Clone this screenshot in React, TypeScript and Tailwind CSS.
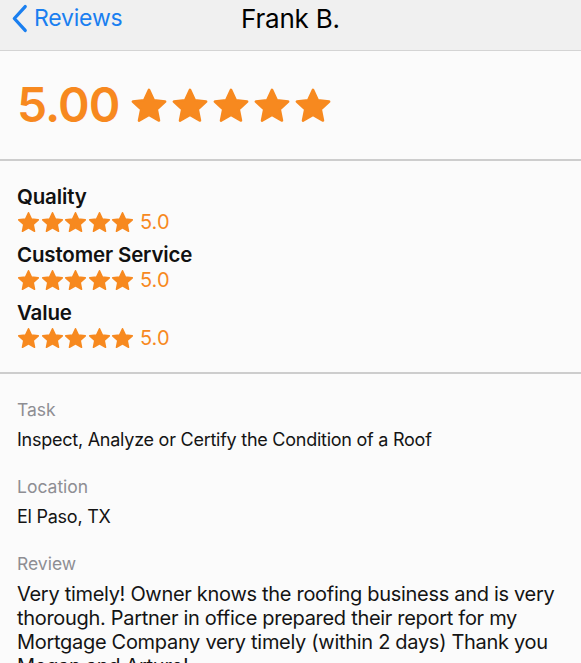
import React from 'react';

const ORANGE = '#f7891f';

function Star({ className }: { className: string }) {
  return (
    <svg viewBox="0 0 24 24" className={className} fill={ORANGE} stroke={ORANGE} strokeWidth={1.6} strokeLinejoin="round">
      <path d="M12 1.8l3.05 6.55 7.15.85-5.3 4.9 1.42 7.1L12 17.6l-6.32 3.6 1.42-7.1-5.3-4.9 7.15-.85z" />
    </svg>
  );
}

function StarRow({ size, gap }: { size: string; gap: string }) {
  return (
    <div className={`flex ${gap}`}>
      {[0, 1, 2, 3, 4].map((i) => (
        <Star key={i} className={size} />
      ))}
    </div>
  );
}

const ratings = ['Quality', 'Customer Service', 'Value'];

export default function App() {
  return (
    <div className="h-[663px] w-[581px] overflow-hidden bg-[#fbfbfb] text-[#111] font-['Inter','Liberation_Sans',sans-serif]">
      {/* nav bar */}
      <div className="grid h-[51px] grid-cols-[1fr_auto_1fr] items-center border-b border-[#d4d4d4] bg-[#f0f0f0] pb-[13px]">
        <div className="flex items-center pl-[11px] text-[#1a7ff0]">
          <svg viewBox="0 0 16 28" className="h-[29px] w-[17px]" fill="none" stroke="currentColor" strokeWidth={3.2} strokeLinecap="round" strokeLinejoin="round">
            <path d="M13.5 2.5L3 14l10.5 11.5" />
          </svg>
          <span className="ml-[6px] text-[23px] leading-none tracking-[-0.2px]">Reviews</span>
        </div>
        <div className="text-[26px] leading-none tracking-[-0.2px] text-black">Frank B.</div>
        <div />
      </div>

      {/* overall */}
      <div className="flex h-[110px] items-center border-b-2 border-[#cdcdcd] pl-[17px]">
        <span className="text-[48px] font-semibold leading-none tracking-[-1px]" style={{ color: ORANGE }}>
          5.00
        </span>
        <div className="ml-[11px] mt-[2px]">
          <StarRow size="h-[38px] w-[38px]" gap="gap-[3px]" />
        </div>
      </div>

      {/* category ratings */}
      <div className="flex flex-col gap-[9px] border-b-2 border-[#cdcdcd] px-[17px] pb-[22px] pt-[24px]">
        {ratings.map((r) => (
          <div key={r}>
            <div className="text-[20.5px] font-semibold leading-[24px] tracking-[-0.15px]">{r}</div>
            <div className="mt-[1px] flex h-[24px] items-center">
              <StarRow size="h-[23px] w-[23px]" gap="gap-[0.5px]" />
              <span className="ml-[6px] text-[20px] leading-none" style={{ color: ORANGE }}>
                5.0
              </span>
            </div>
          </div>
        ))}
      </div>

      {/* details */}
      <div className="flex flex-col gap-[23px] px-[17px] pt-[24px]">
        <div>
          <div className="text-[17.5px] leading-[24px] text-[#8e8e93]">Task</div>
          <div className="mt-[6px] text-[18px] leading-[24px] tracking-[-0.25px] text-[#141414]">
            Inspect, Analyze or Certify the Condition of a Roof
          </div>
        </div>
        <div>
          <div className="text-[17.5px] leading-[24px] text-[#8e8e93]">Location</div>
          <div className="mt-[6px] text-[18px] leading-[24px] tracking-[-0.25px] text-[#141414]">El Paso, TX</div>
        </div>
        <div>
          <div className="text-[17.5px] leading-[24px] text-[#8e8e93]">Review</div>
          <div className="mt-[6px] text-[20px] leading-[24px] tracking-[-0.3px] text-[#141414]">
            Very timely! Owner knows the roofing business and is very thorough. Partner in office prepared their report
            for my Mortgage Company very timely (within 2 days) Thank you Megan and Arturo!
          </div>
        </div>
      </div>
    </div>
  );
}
